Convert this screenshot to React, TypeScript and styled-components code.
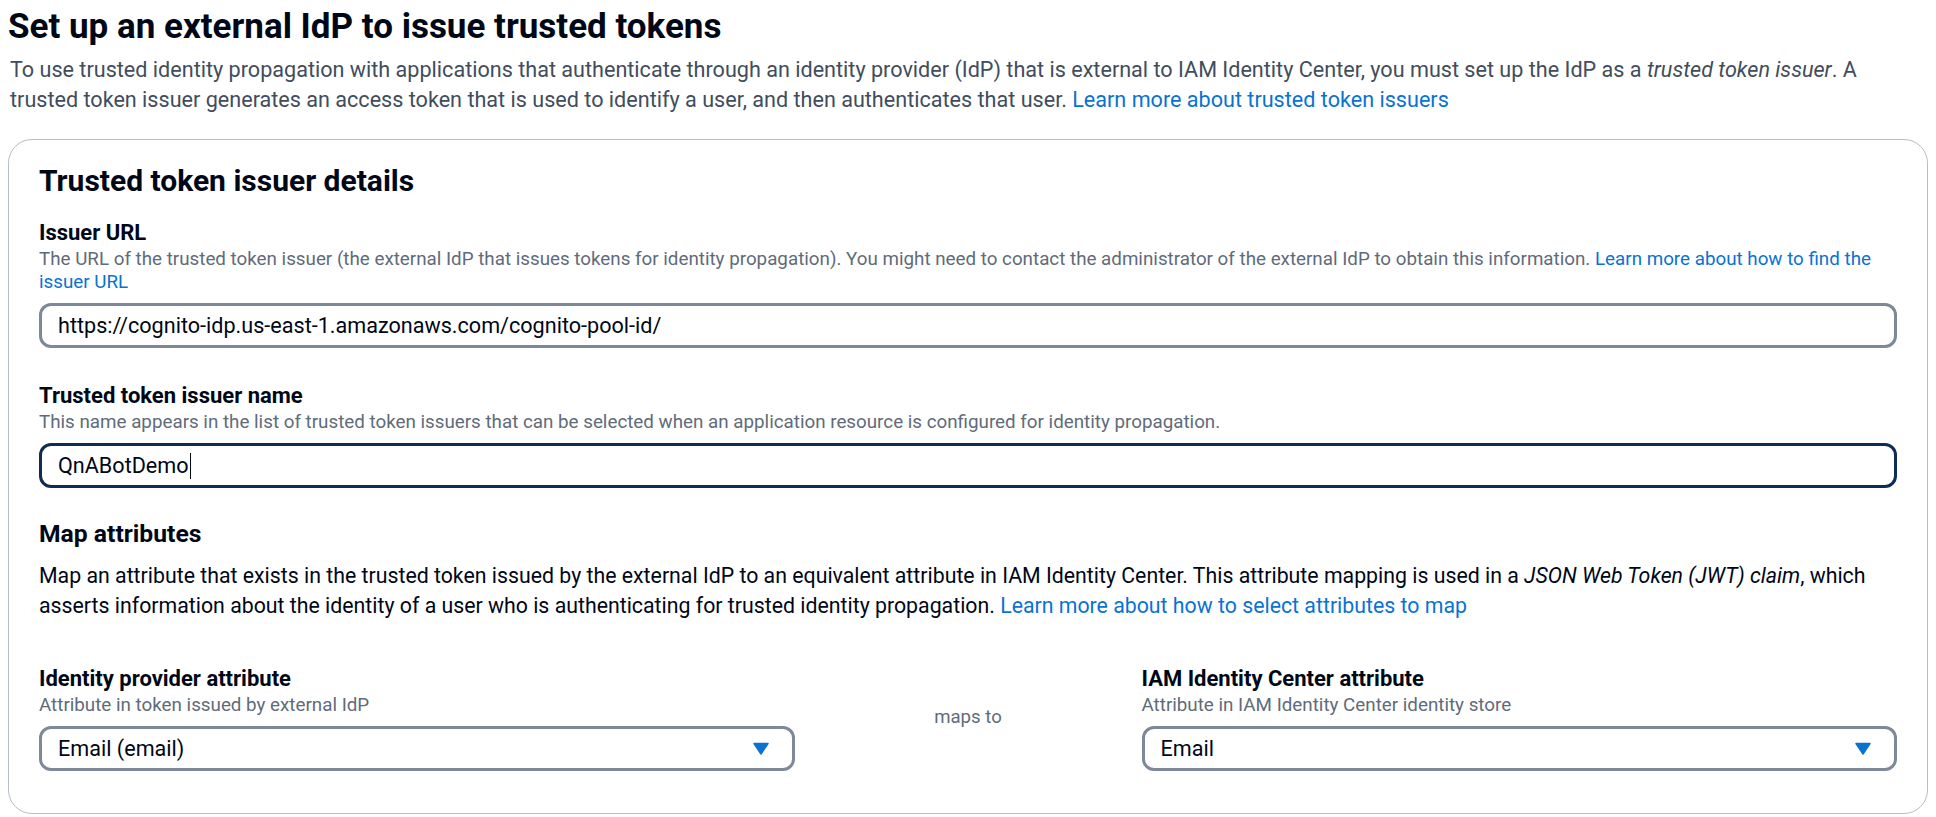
import React from 'react';
import styled, { createGlobalStyle } from 'styled-components';

const GlobalStyle = createGlobalStyle`
  body {
    margin: 0;
    background: #ffffff;
    font-family: Roboto, 'Noto Sans', sans-serif;
    color: #000716;
  }
`;

const Page = styled.main`
  padding: 6px 8px 0;
`;

const Title = styled.h1`
  margin: 0;
  font-size: 35px;
  line-height: 42px;
  font-weight: 700;
  color: #000716;
`;

const Intro = styled.p`
  margin: 7px 0 0 2px;
  font-size: 21.6px;
  line-height: 30px;
  color: #414d5c;
`;

const Link = styled.a`
  color: #0972d3;
  text-decoration: none;
`;

const Card = styled.section`
  margin-top: 24px;
  border: 1px solid #b6bec9;
  border-radius: 24px;
  padding: 23px 30px 42px;
`;

const CardTitle = styled.h2`
  margin: 0;
  font-size: 30px;
  line-height: 36px;
  font-weight: 700;
  color: #000716;
`;

const Field = styled.div<{ $gap?: number }>`
  margin-top: ${(p) => p.$gap ?? 0}px;
  display: flex;
  flex-direction: column;
`;

const Label = styled.label`
  font-size: 22px;
  line-height: 27px;
  font-weight: 700;
  color: #000716;
`;

const Hint = styled.div`
  margin-top: 2px;
  font-size: 18.8px;
  line-height: 23px;
  color: #5f6b7a;
`;

const InputBox = styled.div<{ $focused?: boolean }>`
  margin-top: 9px;
  height: 45px;
  box-sizing: border-box;
  border: 3px solid ${(p) => (p.$focused ? '#0f2c52' : '#7d8998')};
  border-radius: 12px;
  padding: 0 16px;
  display: flex;
  align-items: center;
  font-size: 21.6px;
  color: #000716;
`;

const Caret = styled.span`
  display: inline-block;
  width: 1px;
  height: 26px;
  margin-left: 1px;
  background: #000716;
`;

const SectionTitle = styled.h3`
  margin: 30px 0 0;
  font-size: 24.7px;
  line-height: 32px;
  font-weight: 700;
  color: #000716;
`;

const SectionText = styled.p`
  margin: 11px 0 0;
  font-size: 21.3px;
  line-height: 30px;
  color: #000716;
`;

const MapGrid = styled.div`
  margin-top: 44px;
  display: grid;
  grid-template-columns: 1fr 347px 1fr;
  align-items: center;
`;

const MapsTo = styled.div`
  text-align: center;
  font-size: 18.6px;
  color: #5f6b7a;
  padding-bottom: 2px;
`;

const SelectBox = styled(InputBox)`
  justify-content: space-between;
  padding-right: 23px;
`;

const Arrow = () => (
  <svg width="16" height="13" viewBox="0 0 16 13">
    <path d="M1 1.5 H15 L8 12 Z" fill="#0972d3" stroke="#0972d3" strokeWidth="1.5" strokeLinejoin="round" />
  </svg>
);

const Select = ({ value }: { value: string }) => (
  <SelectBox>
    <span>{value}</span>
    <Arrow />
  </SelectBox>
);

export default function App() {
  return (
    <>
      <GlobalStyle />
      <Page>
        <Title>Set up an external IdP to issue trusted tokens</Title>
        <Intro>
          To use trusted identity propagation with applications that authenticate through an identity provider (IdP)
          that is external to IAM Identity Center, you must set up the IdP as a <em>trusted token issuer</em>. A
          <br />
          trusted token issuer generates an access token that is used to identify a user, and then authenticates that
          user. <Link href="#">Learn more about trusted token issuers</Link>
        </Intro>

        <Card>
          <CardTitle>Trusted token issuer details</CardTitle>

          <Field $gap={20}>
            <Label>Issuer URL</Label>
            <Hint>
              The URL of the trusted token issuer (the external IdP that issues tokens for identity propagation). You
              might need to contact the administrator of the external IdP to obtain this information.{' '}
              <Link href="#">
                Learn more about how to find the
                <br />
                issuer URL
              </Link>
            </Hint>
            <InputBox>https://cognito-idp.us-east-1.amazonaws.com/cognito-pool-id/</InputBox>
          </Field>

          <Field $gap={34}>
            <Label>Trusted token issuer name</Label>
            <Hint>
              This name appears in the list of trusted token issuers that can be selected when an application resource
              is configured for identity propagation.
            </Hint>
            <InputBox $focused>
              QnABotDemo
              <Caret />
            </InputBox>
          </Field>

          <SectionTitle>Map attributes</SectionTitle>
          <SectionText>
            Map an attribute that exists in the trusted token issued by the external IdP to an equivalent attribute in
            IAM Identity Center. This attribute mapping is used in a <em>JSON Web Token (JWT) claim</em>, which
            <br />
            asserts information about the identity of a user who is authenticating for trusted identity propagation.{' '}
            <Link href="#">Learn more about how to select attributes to map</Link>
          </SectionText>

          <MapGrid>
            <Field>
              <Label>Identity provider attribute</Label>
              <Hint>Attribute in token issued by external IdP</Hint>
              <Select value="Email (email)" />
            </Field>
            <MapsTo>maps to</MapsTo>
            <Field>
              <Label>IAM Identity Center attribute</Label>
              <Hint>Attribute in IAM Identity Center identity store</Hint>
              <Select value="Email" />
            </Field>
          </MapGrid>
        </Card>
      </Page>
    </>
  );
}
